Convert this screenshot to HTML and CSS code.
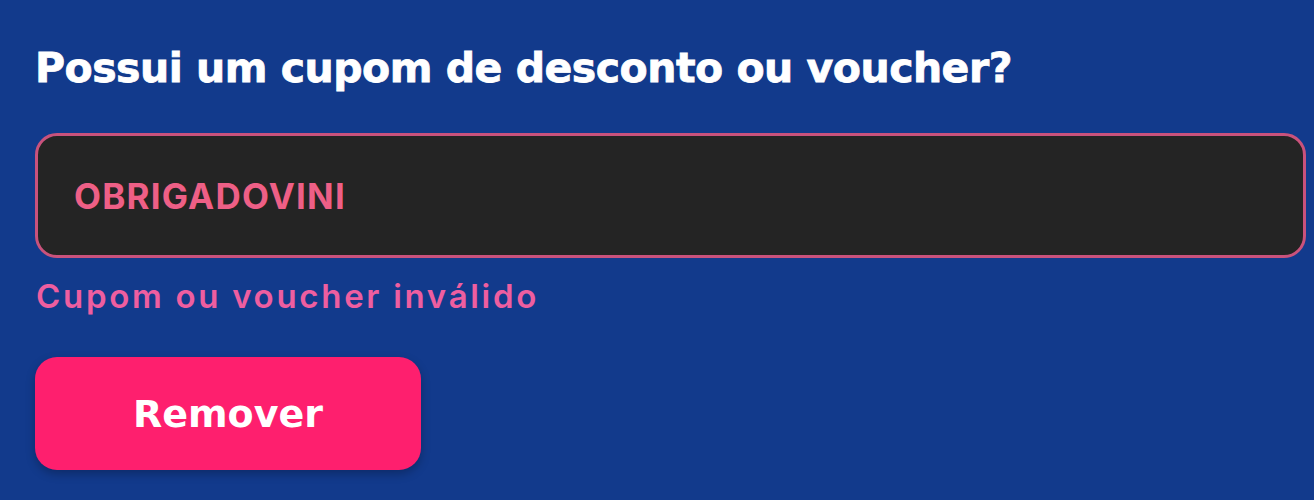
FILE: index.html
```html
<!DOCTYPE html>
<html lang="pt-BR">
<head>
<meta charset="utf-8">
<title>Cupom</title>
<link rel="stylesheet" href="styles.css">
</head>
<body>
<section class="coupon">
  <h2 class="coupon-title">Possui um cupom de desconto ou voucher?</h2>
  <div class="coupon-field">
    <span class="coupon-value">OBRIGADOVINI</span>
  </div>
  <p class="coupon-error">Cupom ou voucher inválido</p>
  <button class="coupon-button" type="button">Remover</button>
</section>
</body>
</html>
```
FILE: styles.css
```css
html, body {
  margin: 0;
  padding: 0;
  background: #123a8c;
  height: 100%;
}
body {
  font-family: "Inter", "Liberation Sans", sans-serif;
}
.coupon {
  display: flex;
  flex-direction: column;
  align-items: flex-start;
  padding: 40px 8px 0 35px;
}
.coupon-title {
  margin: 0;
  color: #ffffff;
  font-family: "DejaVu Sans", sans-serif;
  font-weight: 700;
  font-size: 41px;
  line-height: 56px;
  letter-spacing: -0.5px;
  -webkit-text-stroke: 0.8px #ffffff;
}
.coupon-field {
  margin-top: 37px;
  box-sizing: border-box;
  width: 1271px;
  height: 125px;
  border: 3px solid #c9527c;
  border-radius: 22px;
  background: #242424;
  display: flex;
  align-items: center;
  padding-left: 36px;
}
.coupon-value {
  color: #ee5f86;
  font-family: "Inter", sans-serif;
  font-weight: 700;
  font-size: 35px;
  letter-spacing: 1.2px;
}
.coupon-error {
  margin: 18px 0 0 1px;
  color: #ee5ea0;
  font-family: "Inter", sans-serif;
  font-weight: 600;
  font-size: 33px;
  line-height: 40px;
  letter-spacing: 2.7px;
}
.coupon-button {
  margin-top: 41px;
  width: 386px;
  height: 113px;
  border: none;
  border-radius: 22px;
  background: #fe1f6e;
  color: #ffffff;
  font-family: "DejaVu Sans", sans-serif;
  font-weight: 700;
  font-size: 38px;
  box-shadow: 0 4px 10px rgba(0,0,0,0.25);
  cursor: pointer;
}
```
